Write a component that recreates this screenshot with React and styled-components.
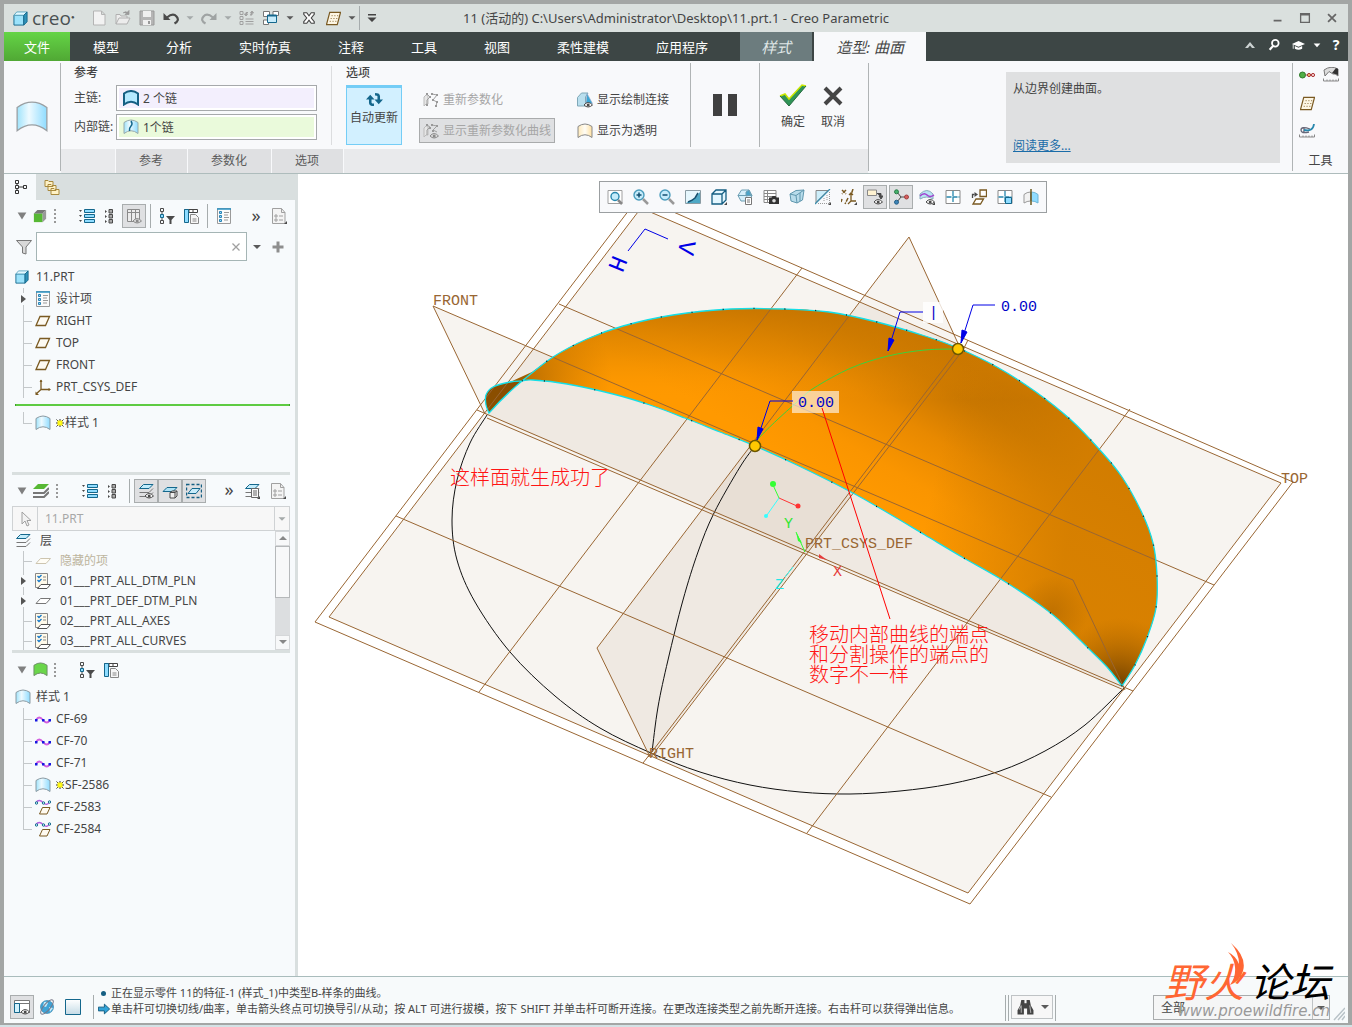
import React from "react";
import styled, { createGlobalStyle, css } from "styled-components";

const GlobalStyle = createGlobalStyle`
  * {
    box-sizing: border-box;
  }
  body {
    margin: 0;
    background: #a3a6a5;
    color: #454545;
    font-family: "Noto Sans", "Noto Sans CJK SC", sans-serif;
    font-size: 12px;
    line-height: 16px;
  }
  button, input, select {
    font: inherit;
    color: inherit;
    margin: 0;
    padding: 0;
    border: 0;
    background: none;
    border-radius: 0;
  }
  svg {
    display: block;
    flex: none;
  }
`;

/* ---------- icons ---------- */

const dark = "#4a4a4a";
const teal = "#14678c";
const sky = "#8fdcff";
const brown = "#7a5a22";
const grey = "#a0a0a0";

const eye = (
  <>
    <path d="M7 13q4-5 8.5 0q-4.5 4-8.5 0z" fill="#fff" stroke={dark} />
    <circle cx="11.2" cy="12.9" r="1.5" fill={dark} />
  </>
);

const corner = <path d="M16 13v3h-3z" fill={dark} />;

const layersShape = (
  <>
    <path d="M5.5 1.5h9.500l-4 4H1.500z" fill="#c2ecfb" stroke={teal} />
    <path d="M1.500 9.500H11l4-4M1.500 13.500H11l4-4" fill="none" stroke="#777" />
  </>
);

const surface = (fill, line, w = 1) => (
  <path d="M1 3.5Q8-1.500 15 3.5V14.5Q8 9 1 14.5z" fill={fill} stroke={line} strokeWidth={w} />
);

const shapes = {
  cube: (
    <>
      <path d="M1 4.5h10.500V15H1z" fill="#9be2fb" stroke={teal} />
      <path d="M1 4.5L4 1h11l-3.500 3.5z" fill="#e3f8ff" stroke="#5aa5c0" />
      <path d="M11.5 4.5L15 1v10.500L11.5 15z" fill="#2f92b8" stroke={teal} />
    </>
  ),
  newDoc: <path d="M2.5 1h8l3.500 3.5V15H2.500zM10.500 1v3.500H14" fill="#f2f2f2" stroke="#b4b4b4" />,
  open: (
    <>
      <path d="M1 14V4.5h4l1 1.500h6v2M1 14l3-6h11l-3 6z" fill="#ececec" stroke="#b0b0b0" />
      <path d="M8 3q3-2.500 5 0M14 .5v4h-4z" fill="#999" stroke="#999" strokeWidth=".8" />
    </>
  ),
  save: (
    <>
      <path d="M1 1h14v14H1z" fill="#b5b5b5" stroke="#999" />
      <path d="M4 1h8v6H4zM4 10h8v5H4z" fill="#efefef" />
      <path d="M9 11h2v3H9z" fill="#999" />
    </>
  ),
  undo: (
    <>
      <path d="M4 7.5q6-5 9.500-1t-2 7" fill="none" stroke={dark} strokeWidth="2.2" />
      <path d="M.5 3v7h7z" fill={dark} />
    </>
  ),
  redo: (
    <>
      <path d="M12 7.5q-6-5-9.500-1t2 7" fill="none" stroke="#9fa3a3" strokeWidth="2.2" />
      <path d="M15.5 3v7h-7z" fill="#9fa3a3" />
    </>
  ),
  caret: <path d="M4 6h8l-4 4z" fill="#5a5a5a" />,
  caretDim: <path d="M4 6h8l-4 4z" fill="#a5aaaa" />,
  caretBig: <path d="M3 4h10l-5 8z" fill="#808080" />,
  customize: <path d="M4 4h8v1.500H4zM3.500 7.500h9L8 12z" fill="#444" />,
  regen: (
    <>
      <path
        d="M1 1.500h3v3H1zM1 6.500h3v3H1zM1 11.500h3v3H1zM6.500 9h8M6.500 11.500h8M6.500 14h8"
        fill="none"
        stroke={grey}
      />
      <path d="M7 5V2.500h2M13 2v3h-2M5.500 4L7 6l1.500-2zM11.500 3L13 1l1.500 2z" fill={grey} stroke={grey} />
    </>
  ),
  windows: (
    <>
      <path d="M.5 1.500h6v5h-6zM10 1.500h5.500v4H10zM.5 10h5v4.500h-5z" fill="#fff" stroke="#777" />
      <path d="M4.500 5h9v7.500h-9z" fill="#c8ecfb" stroke={teal} />
      <path d="M4.500 5h9v1.500h-9z" fill={teal} />
    </>
  ),
  closeBox: (
    <path
      d="M1 1h4l3 4 3-4h4v2l-4 5 4 5v2h-4l-3-4-3 4H1v-2l4-5-4-5z"
      fill="#fff"
      stroke="#444"
      strokeWidth="1.5"
    />
  ),
  gridPlane: (
    <>
      <path d="M4 1.500h11.500l-3.500 13H.5z" fill="#fdf6e4" stroke={brown} strokeWidth="1.3" />
      <path d="M6 5h7.500M5 8h7.500M4 11h7.500" stroke={brown} strokeDasharray="1 2" />
    </>
  ),
  up: <path d="M3 11L8 5l5 6h-3L8 8.500 6 11z" fill="#ccd2d2" />,
  search: (
    <>
      <circle cx="9.500" cy="6" r="3.800" fill="none" stroke="#fff" strokeWidth="2" />
      <path d="M7 9l-4 4.500" stroke="#fff" strokeWidth="2.4" />
    </>
  ),
  cap: (
    <>
      <path d="M0 6l8-3.500L16 6 8 9.500z" fill="#fff" />
      <path d="M3.500 8.500v3.500q4.500 2.500 9 0V8.500L8 10.800z" fill="#fff" />
      <path d="M1.500 6.500V12" stroke="#fff" />
    </>
  ),
  caretWhite: <path d="M3.500 6h9L8 11z" fill="#fff" />,
  minimize: <path d="M3 10h9v2H3z" fill="#666" />,
  maximize: <path d="M3 3h10v10H3zM3 4.500h10" fill="none" stroke="#666" strokeWidth="1.5" />,
  close: <path d="M3.500 3.500l9 9M12.500 3.500l-9 9" stroke="#666" strokeWidth="2" />,
  surface: surface("url(#skyFade)", "#8b9aa2"),
  surfaceLarge: surface("url(#skyFade)", "#9a9fa2", 0.6),
  surfaceBold: surface("#b4e9ff", "#155f83", 2),
  surfaceGreen: surface("#6ad64a", "#6d8c66"),
  surfaceCream: surface("url(#creamFade)", "#888"),
  surfaceInner: (
    <>
      {surface("url(#skyFade)", "#9aa")}
      <path d="M6.500 12q-.500-3 1.500-5t0-5" fill="none" stroke={teal} strokeWidth="1.5" />
    </>
  ),
  refresh: (
    <>
      <path d="M4 6v5q0 2 3.500 2M12 10V5q0-2-3.500-2" fill="none" stroke={teal} strokeWidth="2.4" />
      <path d="M0 8l4-4.500L8 8zM8 8h8l-4 4.500z" fill={teal} />
    </>
  ),
  reparam: (
    <>
      <path d="M1 5q2-3 4-2v9q-2-1-4 2z" fill="#e6e6e6" stroke="#bbb" />
      <path d="M4 14V8l3-3-3-3M9 2l5 1-4 5 4 2-1 4" fill="none" stroke={grey} />
      <path
        d="M3 1h2v2H3zM6 4h2v2H6zM3 12h2v2H3zM8 1h2v2H8zM13 2h2v2h-2zM9 7h2v2H9zM13 9h2v2h-2zM12 13h2v2h-2z"
        fill="#999"
      />
    </>
  ),
  reparamEye: (
    <>
      <path d="M1 5q2-3 4-2v9q-2-1-4 2z" fill="#e6e6e6" stroke="#bbb" />
      <path d="M4 12V7l3-3-3-2M9 2l5 1-4 4 4 2" fill="none" stroke={grey} />
      <path d="M3 1h2v2H3zM6 4h2v2H6zM8 1h2v2H8zM13 2h2v2h-2zM9 7h2v2H9z" fill="#999" />
      <path d="M7 13q4-5 8.500 0q-4.500 4-8.500 0z" fill="#ddd" stroke="#8a8a8a" />
      <circle cx="11.2" cy="12.9" r="1.500" fill="#8a8a8a" />
    </>
  ),
  connect: (
    <>
      <path d="M.5 5.500L4.500 1H11L8.500 5v9h-8z" fill="#b9dfee" stroke="#7fa8b8" />
      <path d="M10 1.500l5.500 10H9z" fill="#3aa6d4" stroke="#9ac" strokeWidth=".6" />
      {eye}
    </>
  ),
  tree: (
    <path
      d="M3.500 1.500h3v3h-3zM3.500 6.500h3v3h-3zM3.500 11.500h3v3h-3zM11.500 6.500h3v3h-3zM5 4.500v2M5 9.500v2M6.500 8h5"
      fill="none"
      stroke="#333"
    />
  ),
  folders: (
    <path
      d="M1 1.500h3l1 1h4v5H1zM4 5.500h3l1 1h4v5H4zM7 9.500h3l1 1h4v5H7z"
      fill="#fff2c6"
      stroke="#a8893d"
    />
  ),
  greenCube: (
    <>
      <path d="M1 5h10v10H1z" fill="#57b834" />
      <path d="M1 5l4-4h10l-4 4z" fill="#777" />
      <path d="M11 5l4-4v10l-4 4z" fill="#999" />
    </>
  ),
  dots: <path d="M5 1v2M5 5v2M5 9v2M5 13v2" stroke="#999" strokeWidth="2" />,
  listRows: (
    <>
      <path d="M5.500 1.500h10v3h-10zM5.500 6.500h10v3h-10zM5.500 11.500h10v3h-10z" fill={sky} stroke={teal} />
      <path d="M0 2h3L1.500 4zM0 7h3L1.500 9zM0 12h3l-1.500 2z" fill={dark} />
    </>
  ),
  listSquares: (
    <>
      <path d="M8 1.500h3.500V5H8zM8 6.500h3.500V10H8zM8 11.500h3.500V15H8z" fill="#aaa" stroke={dark} />
      <path d="M4 2v3l2-1.500zM4 7v3l2-1.500zM4 12v3l2-1.500z" fill={dark} />
    </>
  ),
  columnsEye: (
    <>
      <path
        d="M1.500 1.500h12v12h-12zM1.500 4.500h12M5.500 1.500v12M9.500 1.500v12"
        fill="#ececec"
        stroke="#8a8a8a"
      />
      <path d="M7 13q4-5 8.500 0q-4.500 4-8.500 0z" fill="#ddd" stroke="#8a8a8a" />
      <circle cx="11.2" cy="12.9" r="1.500" fill="#8a8a8a" />
    </>
  ),
  treeFilter: (
    <>
      <path d="M1.500 .5h3v3h-3zM1.500 12.500h3v3h-3zM3 3.500v9" fill="none" stroke={dark} />
      <path d="M1.500 6.500h3v3h-3z" fill={sky} stroke={teal} />
      <path d="M7 8h9l-3.500 4v4h-2v-4z" fill={dark} />
    </>
  ),
  columnsDoc: (
    <>
      <path d="M1.500 1.500h13v3h-13zM6 1.500v3M10 1.500v3" fill="#fff" stroke="#444" />
      <path d="M1.500 1.500H5.500v13h-4z" fill={sky} stroke={teal} />
      <path d="M7.500 6.500h5l3 3v6h-8zM9.500 11h4M9.500 13h4" fill="#f7f7f7" stroke="#888" />
    </>
  ),
  listDoc: (
    <>
      <path d="M1.500 .5h13v15h-13z" fill="#fafafa" stroke="#9a9a9a" />
      <path d="M1 1h14" stroke="#2a93c4" strokeWidth="1.5" />
      <path d="M3.500 3.500h2v2h-2zM3.500 7.500h2v2h-2zM3.500 11.500h2v2h-2z" fill={sky} stroke="#2a83b4" />
      <path d="M8 4.500h5M8 7h4M8 9.500h5M8 12h4" stroke="#999" />
    </>
  ),
  page: (
    <>
      <path d="M1.500 .5h9l3.500 4v11H1.500z" fill="#f4f4f4" stroke={grey} />
      <path d="M4 7h2v2H4zM4 11h2v2H4zM8 8h4M8 12h4M10.500 .5v4H14" fill="none" stroke={grey} />
      {corner}
    </>
  ),
  funnel: <path d="M.5 1.500h15L10 8v7l-3.500-1V8z" fill="#d8d8d8" stroke="#777" />,
  clear: <path d="M4 4l8 8M12 4l-8 8" stroke={grey} strokeWidth="1.5" />,
  plus: <path d="M2.500 8h11M8 2.500v11" stroke="#8e8e8e" strokeWidth="3" />,
  plane: <path d="M5 3.500h9.500L10.500 12.500H1z" fill="#fdfaf2" stroke={brown} strokeWidth="1.3" />,
  csys: (
    <>
      <path d="M6 1v9.500h9M6 10.500L1 15" fill="none" stroke={brown} strokeWidth="1.3" />
      <path d="M4.500 3L6 .5 7.500 3zM13.500 9l2.500 1.500L13.500 12zM.5 12.500V16H4z" fill={brown} />
    </>
  ),
  greenLayers: (
    <>
      <path d="M5 1h11l-5 5H0z" fill="#57b834" />
      <path d="M0 10h11l5-5M0 14h11l5-5" fill="none" stroke="#777" strokeWidth="2" />
    </>
  ),
  layers: layersShape,
  layersEye: (
    <>
      {layersShape}
      {eye}
    </>
  ),
  layerCube: (
    <>
      <path d="M5 4.500h10l-4 4H1z" fill="#aee2f5" stroke={teal} />
      <path d="M8 9.500h5V15H8zM8 9.500L10 8h5v5l-2 2M13 9.500L15 8" fill="#eee" stroke={dark} />
    </>
  ),
  layerSelect: (
    <>
      <path
        d="M.5 1.500h15v13H.5z"
        fill="none"
        stroke="#155f83"
        strokeWidth="1.4"
        strokeDasharray="3 2"
      />
      <path d="M6 5.500h8l-4 5H2z" fill="#c8ecfa" stroke={teal} />
    </>
  ),
  layersDoc: (
    <>
      {layersShape}
      <path d="M7.500 5.500h7v9h-7zM9 8h4M9 10h4M9 12h4" fill="#fafafa" stroke="#666" />
      {corner}
    </>
  ),
  cursor: <path d="M5 1v12l3-3 2 5 2-1-2-4.500h4z" fill="#f2f2f2" stroke={grey} />,
  layer: <path d="M5.500 5.500h10l-4.500 5H1z" fill="#fff" stroke="#777" />,
  layerDim: <path d="M5.500 5.500h10l-4.500 5H1z" fill="#fffdf6" stroke="#cdc5b0" />,
  layerRule: (
    <>
      <path d="M.5 .5h12v14H.5z" fill="#fffaea" stroke="#888" />
      <path d="M2.500 3L4 4.500 6.500 2M2.500 7L4 8.500 6.500 6" fill="none" stroke="#1778c8" strokeWidth="1.4" />
      <path d="M8 4h3M8 7h3" stroke="#888" />
      <path d="M6 11.500h9.500L12 15.500H2.500z" fill="#fff" stroke="#555" />
    </>
  ),
  curve: (
    <>
      <path d="M1 9q3-5 7 0t7 0" fill="none" stroke="#d25fe0" strokeWidth="1.8" />
      <path d="M0 8h2.500v2.500H0zM7 8h2.500v2.500H7zM13.500 8H16v2.500h-2.500z" fill="#1717e0" />
    </>
  ),
  curveOnPlane: (
    <>
      <path d="M1 3.500q3-4 7 0t7-1" fill="none" stroke="#b45fe0" strokeWidth="1.3" />
      <circle cx="1.500" cy="4" r="1.200" fill="#cff" stroke={teal} />
      <circle cx="8.500" cy="4" r="1.200" fill="#cff" stroke={teal} />
      <circle cx="14.500" cy="3" r="1.200" fill="#cff" stroke={teal} />
      <path d="M7.500 8.500H15l-3 6.500H4.500z" fill="#fffaf0" stroke={brown} />
    </>
  ),
  star: (
    <>
      <path d="M8 0v16M0 8h16M1 1l14 14M15 1L1 15" stroke="#333" strokeWidth="2" />
      <path d="M3 3h10v10H3z" fill="#f6e800" />
      <path d="M5 5h6v6H5z" fill="#ffff20" />
    </>
  ),
  zoomFit: (
    <>
      <path d="M1 1.500h14v13H1z" fill="#fff" stroke={grey} />
      <circle cx="8" cy="7.500" r="4" fill="#c5ecfb" stroke="#2787ad" strokeWidth="1.4" />
      <path d="M11 11l4 4" stroke="#888" strokeWidth="2.5" />
    </>
  ),
  zoomIn: (
    <>
      <circle cx="6" cy="6" r="5" fill="#c5ecfb" stroke="#4a9cbc" strokeWidth="1.4" />
      <path d="M3.500 6h5M6 3.500v5" stroke="#124f70" strokeWidth="1.5" />
      <path d="M10 10l5 5" stroke="#999" strokeWidth="2.5" />
    </>
  ),
  zoomOut: (
    <>
      <circle cx="6" cy="6" r="5" fill="#c5ecfb" stroke="#4a9cbc" strokeWidth="1.4" />
      <path d="M3.500 6h5" stroke="#124f70" strokeWidth="1.5" />
      <path d="M10 10l5 5" stroke="#999" strokeWidth="2.5" />
    </>
  ),
  repaint: (
    <>
      <path d="M.5 1.500h15v13H.5z" fill="#e6f7fd" stroke="#8a9ca4" />
      <path d="M1 14L10 9l5-6v11z" fill="#4fa9c6" />
      <path d="M3 13q5-2 7-4l3-5" fill="none" stroke="#15506e" strokeWidth="1.5" />
    </>
  ),
  display: (
    <>
      <path
        d="M1 5h10v10H1zM1 5l4-4h10v10l-4 4M11 5l4-4"
        fill="#e4f7ff"
        stroke="#155f83"
        strokeWidth="1.3"
      />
      {corner}
    </>
  ),
  saved: (
    <>
      <path d="M1 6.500L4.500 1H12l3 5.500L12 12H4z" fill="#d5effa" stroke="#6c9fb4" />
      <path d="M1 6.500h14M9 7V3l3-2 2 5z" fill="#49a4c9" stroke="#6c9fb4" />
      <path d="M8.500 8.500h6v7h-6zM10 11h3M10 13h3" fill="#fff" stroke="#777" />
    </>
  ),
  snapshot: (
    <>
      <path
        d="M1 1.500h12v12H1zM1 4.500h12M1 7.500h12M1 10.500h12M4.500 1.500v12"
        fill="#fff"
        stroke="#888"
      />
      <path d="M6 8.500h2.500l1-1.500h3l1 1.500H16V15H6z" fill="#333" />
      <circle cx="11" cy="11.700" r="1.800" fill="#ddd" />
    </>
  ),
  perspective: (
    <>
      <path d="M1 5l6-3.500 8-.5-1.500 10L8 14l-6-2z" fill="#b8dceb" stroke="#5f97ae" />
      <path d="M1 5l6 1.500 8-5.500M7 6.500L8 14M11 4v8" fill="none" stroke="#5f97ae" />
    </>
  ),
  section: (
    <>
      <path d="M1 1.500h12L1 13.500z" fill="#cdeefa" stroke="#888" />
      <path d="M14.500 3v11.500H3M12 6v6M9 9v3" fill="none" stroke="#999" strokeDasharray="1 1" />
      <path d="M0 15L15 0" stroke="#3d8cab" strokeWidth="1.3" />
      {corner}
    </>
  ),
  datum: (
    <>
      <path
        d="M1 1l4 4M5 1L1 5M12 0l-2 6M7 9l-3 6M1 10l-1 3"
        stroke={brown}
        strokeWidth="1.5"
        strokeDasharray="4 1"
      />
      <path d="M10 5v7h5M10 12l-3 3M8 6l2-2 2 2" fill="none" stroke={brown} strokeWidth="1.3" />
      {corner}
    </>
  ),
  annotation: (
    <>
      <path d="M.5 1h9v5.500h-9z" fill="#fff3d2" stroke="#888" />
      <path d="M10 4.500h4v4M12 7h4l-2 3z" fill={dark} stroke={dark} />
      {eye}
    </>
  ),
  spin: (
    <>
      <path d="M4 3l4 5h5M8 8l-4 5" fill="none" stroke={dark} />
      <circle cx="3.500" cy="2.800" r="2" fill="#46b36c" stroke="#2a7a48" />
      <circle cx="13.500" cy="8" r="2" fill="#d86060" stroke="#a04040" />
      <circle cx="3.500" cy="13.200" r="2" fill="#3f86b8" stroke="#245f88" />
    </>
  ),
  styleDisplay: (
    <>
      <path d="M1 5q7-7 13 0v5q-6-4-13 0z" fill="#b8e3f4" stroke="#8ab" />
      <path d="M1 7q4-4 7-1t7 0" fill="none" stroke="#a33fd0" strokeWidth="1.5" />
      {eye}
      {corner}
    </>
  ),
  fourView: (
    <>
      <path d="M1 1.500h14v13H1z" fill="#fff" stroke="#8a8a8a" />
      <path d="M8 2v12M1.500 8h13" stroke="#2787ad" strokeWidth="1.3" strokeDasharray="5 1" />
    </>
  ),
  activePlane: (
    <>
      <path d="M9 1h6.500v6.500H9z" fill="#fff" stroke={brown} strokeWidth="1.3" />
      <path d="M5 10h7.500l-3 5H2z" fill="#fff" stroke={brown} strokeWidth="1.3" />
      <path d="M1.500 9V5.500h2" fill="none" stroke={dark} strokeWidth="1.3" />
      <path d="M3.500 3v5L7 5.500z" fill={dark} />
    </>
  ),
  singleView: (
    <>
      <path d="M1 1.500h14v13H1z" fill="#fff" stroke="#8a8a8a" />
      <path d="M8 2v12M1.500 8h13" stroke="#2787ad" strokeWidth="1.3" strokeDasharray="5 1" />
      <path d="M8.500 8.500h6v6h-6z" fill={sky} stroke={teal} />
    </>
  ),
  symmetry: (
    <>
      <path d="M1 5.500Q4 3 7.500 3v9Q4 12 1 14z" fill="#f2f2f2" stroke="#999" />
      <path d="M8.500 3Q12 3 15 5.500V14q-3-2-6.500-2z" fill={sky} stroke="#6bb5d6" />
      <path d="M8 0v16" stroke="#6b5a20" strokeWidth="1.5" />
    </>
  ),
  pins: (
    <>
      <circle cx="3.500" cy="8" r="3" fill="#4fae45" stroke="#2e7a29" />
      <path d="M6.500 8h3" stroke="#a55" />
      <circle cx="10" cy="8" r="1.600" fill="#f0c070" stroke="#a33" />
      <circle cx="14" cy="8" r="1.600" fill="#f6d5d5" stroke="#a33" />
    </>
  ),
  measure: (
    <>
      <path d="M1 3q7-5 14-1v7q-3-3-5-2L6 4.500 2 9z" fill="#ddd" stroke="#777" />
      <path d="M9 6l4-5 2 1v6z" fill="#333" />
      <path d="M.5 11.500V14h15v-2.500M4 12.500V14M7 12.500V14M10 12.500V14M13 12.500V14" fill="none" stroke="#888" />
    </>
  ),
  analysis: (
    <>
      <path d="M11 6Q2 3 2 7t8 2M5 5v5" fill="none" stroke="#667" strokeWidth="1.3" />
      <path d="M5 7q9 2 10-6" fill="none" stroke="#2787ad" strokeWidth="1.8" />
      <path d="M.5 11.500V14h15v-2.500M4 12.500V14M7 12.500V14M10 12.500V14M13 12.500V14" fill="none" stroke="#888" />
    </>
  ),
  panelEye: (
    <>
      <path d="M.5 1.500h15v12H.5zM.5 4.500h15" fill="#fff" stroke="#777" />
      <path d="M.5 4.500h5v9h-5z" fill="#d2f1fc" stroke={teal} />
      {eye}
    </>
  ),
  globe: (
    <>
      <circle cx="8" cy="8" r="6.500" fill="#3fa3d6" stroke="#2a7ba6" strokeWidth=".6" />
      <path d="M5 3q3-1 4 1L7 8 4 7zM10 8l4 1-3 4z" fill="#c5ebfa" />
      <ellipse cx="8" cy="8" rx="9" ry="3.200" transform="rotate(-50 8 8)" fill="none" stroke="#778" />
    </>
  ),
  blank: <path d="M.5 .5h15v15H.5z" fill="url(#paneFade)" stroke={teal} />,
  nextArrow: (
    <path d="M.5 5.500h8V1.500L15.500 8l-7 6.500v-4h-8z" fill="#31a3d8" stroke="#155f83" strokeWidth="1.3" />
  ),
  binoculars: (
    <>
      <path d="M4 1h3v3h2V1h3l1 5 2.500 4.500v4h-6V9h-3v5.500h-6v-4L3 6z" fill="#444" />
      <path d="M2 10l2-4v7M12 6l1 7" stroke="#aaa" fill="none" />
    </>
  ),
};

const Icon = ({ name, size = 16 }) => (
  <svg width={size} height={size} viewBox="0 0 16 16" aria-hidden="true">
    {shapes[name]}
  </svg>
);

/* ---------- window frame ---------- */

const Gradients = styled.svg`
  position: absolute;
`;

const Window = styled.div`
  display: flex;
  flex-direction: column;
  min-height: 100vh;
  padding: 4px 4px 2px;
  border-bottom: 2px solid #d3e2e5;
`;

const IconButton = styled.button`
  display: flex;
  align-items: center;
  justify-content: center;
  width: ${(props) => props.$w || 24}px;
  height: 24px;
  flex: none;
  ${(props) =>
    props.$on &&
    css`
      background: #dfe0e2;
      border: 1px solid #a9adae;
    `}
`;

const Divider = styled.span`
  width: 1px;
  height: ${(props) => props.$h || 24}px;
  margin: 0 ${(props) => props.$m || 0}px;
  background: #a6acad;
  flex: none;
`;

const TitleBar = styled.header`
  display: grid;
  grid-template-columns: 1fr auto 1fr;
  align-items: center;
  height: 28px;
  background: #dae0de;
`;

const QuickAccess = styled.div`
  display: flex;
  align-items: center;
  padding-left: 9px;
`;

const Brand = styled.span`
  width: 59px;
  padding-left: 4px;
  font: 19px/24px "Open Sans", sans-serif;
  color: #4a5152;

  sup {
    font-size: 6px;
    line-height: 8px;
    vertical-align: 6px;
  }
`;

const Title = styled.h1`
  margin: 0;
  font-size: 13px;
  font-weight: 400;
  white-space: pre;
`;

const WindowButtons = styled.div`
  display: flex;
  justify-content: flex-end;
  gap: 3px;
  padding-right: 4px;
`;

const TabBar = styled.nav`
  display: flex;
  height: 29px;
  background: #3d4645;
`;

const FileTab = styled.button`
  width: 66px;
  color: #fff;
  font-size: 13px;
  background: linear-gradient(#64d446, #50a834);
`;

const Tabs = styled.div`
  display: flex;
  gap: 1px;
`;

const Tab = styled.button`
  padding: 0 23px;
  font-size: 13px;
  color: #fff;
  white-space: nowrap;
`;

const ContextTab = styled(Tab)`
  margin-left: ${(props) => (props.$active ? 2 : 9)}px;
  padding: 0 ${(props) => (props.$active ? 22 : 21)}px;
  font-size: 15px;
  font-style: italic;
  color: ${(props) => (props.$active ? "#454545" : "#dfe6e6")};
  background: ${(props) => (props.$active ? "#f8f9fb" : "#6c7c7e")};
`;

const TabTools = styled.div`
  display: flex;
  align-items: center;
  height: 26px;
  margin-left: auto;

  b {
    color: #fff;
    font-size: 14px;
  }
`;

/* ---------- ribbon ---------- */

const Ribbon = styled.section`
  display: flex;
  height: 113px;
  background: #f8f9fb;
  border-bottom: 1px solid #aebcbc;
`;

const RibbonIcon = styled.div`
  width: 56px;
  display: flex;
  align-items: center;
  justify-content: center;
`;

const Line = styled.span`
  width: 1px;
  flex: none;
  margin: ${(props) => (props.$short ? "5px 0 4px" : "2px 0")};
  background: ${(props) => (props.$short ? "#dcdddf" : "#b0b4b5")};
`;

const Dashboard = styled.div`
  width: 807px;
  display: flex;
  flex-direction: column;
`;

const Controls = styled.div`
  display: flex;
  height: 88px;
`;

const Group = styled.div`
  width: ${(props) => props.$w}px;
  padding-left: ${(props) => props.$inset || 13}px;
`;

const GroupTitle = styled.h2`
  margin: 0;
  padding: 4px 0;
  font-size: 12px;
  line-height: 16px;
  font-weight: 500;
`;

const Collector = styled.label`
  display: flex;
  align-items: center;
  height: 26px;
  margin-bottom: 3px;

  > span:first-child {
    width: 42px;
  }
`;

const CollectorBox = styled.span`
  display: flex;
  align-items: center;
  gap: 4px;
  width: 201px;
  height: 26px;
  padding-left: 6px;
  border: 1px solid #a6a9ab;
  background: ${(props) => props.$color};
  box-shadow: inset 0 0 0 2px #fff;

  input {
    width: 160px;
    height: 20px;
  }
`;

const Options = styled.div`
  display: grid;
  grid-template-columns: 73px 154px auto;
  align-content: start;
`;

const UpdateButton = styled.button`
  grid-row: span 2;
  width: 56px;
  height: 60px;
  display: flex;
  flex-direction: column;
  align-items: center;
  gap: 2px;
  padding-top: 3px;
  background: #d2f0ff;
  border: 1px solid #74cdf6;
  border-top-width: 3px;
`;

const OptionButton = styled.button`
  justify-self: start;
  display: flex;
  align-items: center;
  gap: 4px;
  height: 25px;
  margin: 2px 0 4px;
  padding: 0 3px;
  white-space: nowrap;
  border: 1px solid ${(props) => (props.$pressed ? "#a9abac" : "transparent")};
  background: ${(props) => (props.$pressed ? "#dfe0e2" : "none")};

  &:disabled {
    color: #a6a6a6;
  }
`;

const Pause = styled.button`
  width: 68px;
  display: flex;
  align-items: center;
  justify-content: center;
  gap: 6px;

  i {
    width: 9px;
    height: 22px;
    background: #404040;
  }
`;

const Confirm = styled.div`
  display: flex;
  padding-left: 13px;
`;

const ConfirmButton = styled.button`
  width: 40px;
  display: flex;
  flex-direction: column;
  align-items: center;
  padding-top: 23px;
  gap: 6px;
`;

const Flyouts = styled.div`
  display: flex;
  gap: 1px;
  height: 24px;
  padding-left: 55px;
  background: linear-gradient(to right, #e9eaec 54px, #f8f9fb 54px 283px, #e9eaec 283px);

  button {
    padding: 0 24px 0 23px;
    color: #5a5a5a;
    background: #dfe0e2;
  }
`;

const Help = styled.aside`
  width: 274px;
  margin: 11px 12px 10px auto;
  padding: 9px 7px;
  display: flex;
  flex-direction: column;
  justify-content: space-between;
  background: #dfe0e1;

  p {
    margin: 0;
  }
  a {
    color: #1a6ca8;
  }
`;

const Tools = styled.div`
  width: 55px;
  padding: 2px 2px 0;

  div {
    display: grid;
    grid-template-columns: 24px 24px;
    grid-auto-rows: 28px;
  }
  p {
    margin: 6px 0 0;
    text-align: center;
  }
`;

/* ---------- model tree column ---------- */

const Workspace = styled.main`
  display: flex;
  flex: 1;
`;

const Sidebar = styled.aside`
  width: 294px;
  flex: none;
  background: #f7fafc;
  border-right: 3px solid #d9dfdf;
`;

const SideTabs = styled.div`
  display: flex;
  height: 26px;
  background: #d9dfdf;

  button {
    width: 32px;
    height: 26px;
  }
  button:first-child {
    background: #f7fafc;
  }
`;

const Toolbar = styled.div`
  display: flex;
  align-items: center;
  height: ${(props) => props.$h || 32}px;
  padding-left: 10px;
`;

const Spacer = styled.span`
  width: ${(props) => props.$w}px;
  flex: none;
`;

const More = styled.button`
  width: 22px;
  font-size: 18px;
  line-height: 20px;
  padding-bottom: 3px;
`;

const SearchRow = styled.div`
  display: flex;
  align-items: center;
  height: 29px;
  padding-left: 12px;
  margin-bottom: 5px;
`;

const SearchBox = styled.div`
  display: flex;
  align-items: center;
  width: 211px;
  height: 29px;
  margin-left: 4px;
  background: #fff;
  border: 1px solid #a5b5b5;

  input {
    width: 192px;
    height: 27px;
    padding: 0 6px;
  }
`;

const Tree = styled.ul`
  margin: 0;
  padding: 0;
  list-style: none;
`;

const ActiveFeature = styled(Tree)`
  padding-bottom: 38px;
`;

const Row = styled.li`
  display: flex;
  align-items: center;
  height: ${(props) => props.$h || 22}px;
  padding-left: ${(props) => (props.$root ? 11 : 19)}px;
  color: ${(props) => (props.$dim ? "#bdb59e" : "#454545")};
  white-space: pre;
`;

const Guide = styled.span`
  display: flex;
  align-items: center;
  align-self: stretch;
  width: 10px;
  margin-right: 2px;
  background-image: linear-gradient(#c4c8ca, #c4c8ca), linear-gradient(#c4c8ca, #c4c8ca);
  background-repeat: no-repeat;
  background-position: 0 0, 0 50%;
  background-size: 1px ${(props) => (props.$last ? "50%" : "100%")}, ${(props) => (props.$open ? "0 0" : "9px 1px")};

  svg {
    margin-left: -2px;
  }
`;

const Label = styled.span`
  padding-left: ${(props) => props.$gap || 5}px;
`;

const InsertLine = styled.div`
  height: 2px;
  margin: 6px 5px 6px 11px;
  background: #5ecb42;
  border: solid #3f9f2a;
  border-width: 0 1px;
`;

const PanelEdge = styled.div`
  height: 3px;
  margin: 0 5px 0 8px;
  background: #d9dfdf;
`;

const Combo = styled.div`
  display: flex;
  align-items: center;
  height: 25px;
  margin: 0 5px 0 8px;
  border: 1px solid #cfd2d4;
  background: #f7f7f7;

  select {
    flex: 1;
    height: 23px;
    padding-left: 7px;
    appearance: none;
    color: #a8a8a8;
    opacity: 1;
    border-left: 1px solid #cfd2d4;
    border-right: 1px solid #cfd2d4;
  }
`;

const LayerList = styled.div`
  display: flex;
  height: 119px;
  overflow: hidden;
  margin-right: 5px;

  ul {
    flex: 1;
  }
`;

const ScrollBar = styled.div`
  width: 15px;
  display: flex;
  flex-direction: column;
  background: #dcdee0;

  button {
    height: 15px;
    background: #f7f8f9;
    border: 1px solid #d5d7d9;
    display: flex;
    justify-content: center;
  }
  i {
    height: 52px;
    background: #f7f8f9;
    border: 1px solid #b5b8ba;
    margin-bottom: auto;
  }
`;

const TreeRow = ({ icon, text, h, last, open, star, dim, gap }) => (
  <Row $h={h} $dim={dim}>
    <Guide $last={last} $open={open}>
      {open && (
        <svg width="6" height="12" viewBox="0 0 6 12" aria-hidden="true">
          <path d="M0 0h6v12H0z" fill="#f7fafc" />
          <path d="M0 2l5 4-5 4z" fill="#555" />
        </svg>
      )}
    </Guide>
    <Icon name={icon} />
    {star && <Label />}
    {star && <Icon name="star" size={8} />}
    <Label $gap={star ? 1 : gap}>{text}</Label>
  </Row>
);

const modelItems = [
  { icon: "listDoc", text: "设计项", open: true },
  { icon: "plane", text: "RIGHT" },
  { icon: "plane", text: "TOP" },
  { icon: "plane", text: "FRONT" },
  { icon: "csys", text: "PRT_CSYS_DEF" },
];

const layerItems = [
  { icon: "layerDim", text: "隐藏的项", dim: true },
  { icon: "layerRule", text: "01___PRT_ALL_DTM_PLN", open: true },
  { icon: "layer", text: "01___PRT_DEF_DTM_PLN", open: true },
  { icon: "layerRule", text: "02___PRT_ALL_AXES" },
  { icon: "layerRule", text: "03___PRT_ALL_CURVES" },
];

const styleItems = [
  { icon: "curve", text: "CF-69" },
  { icon: "curve", text: "CF-70" },
  { icon: "curve", text: "CF-71" },
  { icon: "surface", text: "SF-2586", star: true },
  { icon: "curveOnPlane", text: "CF-2583" },
  { icon: "curveOnPlane", text: "CF-2584", last: true },
];

const ModelTree = () => (
  <Sidebar>
    <SideTabs>
      <IconButton aria-label="模型树"><Icon name="tree" /></IconButton>
      <IconButton aria-label="文件夹"><Icon name="folders" /></IconButton>
    </SideTabs>
    <Toolbar>
      <IconButton $w={16} aria-label="折叠"><Icon name="caretBig" size={14} /></IconButton>
      <IconButton $w={20} aria-label="模型"><Icon name="greenCube" size={14} /></IconButton>
      <Icon name="dots" />
      <Spacer $w={10} />
      <IconButton $w={22} aria-label="展开"><Icon name="listRows" /></IconButton>
      <IconButton $w={22} aria-label="收起"><Icon name="listSquares" /></IconButton>
      <Spacer $w={2} />
      <IconButton $on aria-label="列"><Icon name="columnsEye" /></IconButton>
      <Divider $m={4} />
      <IconButton aria-label="过滤"><Icon name="treeFilter" /></IconButton>
      <IconButton aria-label="树列"><Icon name="columnsDoc" /></IconButton>
      <Divider $m={4} />
      <IconButton aria-label="列表"><Icon name="listDoc" /></IconButton>
      <Spacer $w={9} />
      <More aria-label="更多">»</More>
      <IconButton aria-label="设置"><Icon name="page" /></IconButton>
    </Toolbar>
    <SearchRow>
      <Icon name="funnel" />
      <SearchBox>
        <input type="text" aria-label="搜索模型树" />
        <Icon name="clear" size={14} />
      </SearchBox>
      <IconButton $w={20} aria-label="搜索选项"><Icon name="caret" /></IconButton>
      <IconButton $w={22} aria-label="添加"><Icon name="plus" /></IconButton>
    </SearchRow>
    <Tree>
      <Row $root>
        <Icon name="cube" size={14} />
        <Label $gap={7}>11.PRT</Label>
      </Row>
      {modelItems.map((item) => (
        <TreeRow key={item.text} {...item} />
      ))}
    </Tree>
    <InsertLine />
    <ActiveFeature>
      <TreeRow icon="surface" text="样式 1" star last />
    </ActiveFeature>
    <PanelEdge />
    <Toolbar $h={31}>
      <IconButton $w={16} aria-label="折叠"><Icon name="caretBig" size={14} /></IconButton>
      <IconButton $w={22} aria-label="层"><Icon name="greenLayers" /></IconButton>
      <Icon name="dots" />
      <Spacer $w={11} />
      <IconButton $w={22} aria-label="展开"><Icon name="listRows" /></IconButton>
      <IconButton $w={22} aria-label="收起"><Icon name="listSquares" /></IconButton>
      <Spacer $w={2} />
      <Divider $m={4} />
      <IconButton $on aria-label="层显示"><Icon name="layersEye" /></IconButton>
      <IconButton $on aria-label="层对象"><Icon name="layerCube" /></IconButton>
      <IconButton $on aria-label="层选择"><Icon name="layerSelect" /></IconButton>
      <Spacer $w={12} />
      <More aria-label="更多">»</More>
      <IconButton aria-label="层设置"><Icon name="layersDoc" /></IconButton>
      <IconButton $w={28} aria-label="设置"><Icon name="page" /></IconButton>
    </Toolbar>
    <Combo>
      <IconButton aria-label="选择"><Icon name="cursor" /></IconButton>
      <select aria-label="活动层对象" disabled>
        <option>11.PRT</option>
      </select>
      <Icon name="caretDim" size={14} />
    </Combo>
    <LayerList>
      <Tree>
        <Row $root $h={20}>
          <Icon name="layers" />
          <Label $gap={9}>层</Label>
        </Row>
        {layerItems.map((item) => (
          <TreeRow key={item.text} h={20} gap={9} {...item} />
        ))}
      </Tree>
      <ScrollBar>
        <button aria-label="向上">
          <svg width="8" height="12" viewBox="0 0 8 12" aria-hidden="true">
            <path d="M0 8l4-4 4 4z" fill="#888" />
          </svg>
        </button>
        <i />
        <button aria-label="向下">
          <svg width="8" height="12" viewBox="0 0 8 12" aria-hidden="true">
            <path d="M0 4l4 4 4-4z" fill="#888" />
          </svg>
        </button>
      </ScrollBar>
    </LayerList>
    <PanelEdge />
    <Toolbar $h={33}>
      <IconButton $w={16} aria-label="折叠"><Icon name="caretBig" size={14} /></IconButton>
      <IconButton $w={20} aria-label="样式"><Icon name="surfaceGreen" size={15} /></IconButton>
      <Icon name="dots" />
      <Spacer $w={9} />
      <IconButton aria-label="过滤"><Icon name="treeFilter" /></IconButton>
      <IconButton aria-label="树列"><Icon name="columnsDoc" /></IconButton>
    </Toolbar>
    <Tree>
      <Row $root>
        <Icon name="surface" />
        <Label>样式 1</Label>
      </Row>
      {styleItems.map((item) => (
        <TreeRow key={item.text} {...item} />
      ))}
    </Tree>
  </Sidebar>
);

/* ---------- graphics window ---------- */

const Graphics = styled.section`
  position: relative;
  flex: 1;
  min-width: 0;
  background: #fff;
  overflow: hidden;

  > svg {
    width: 100%;
    height: auto;
  }
`;

const ViewBar = styled.div`
  position: absolute;
  top: 7px;
  left: 50%;
  transform: translateX(-50%);
  display: flex;
  align-items: center;
  height: 32px;
  padding: 0 3px;
  gap: 2px;
  background: #f8f9fb;
  border: 1px solid #9b9fa1;
`;

const viewTools = [
  ["zoomFit", "重新调整"],
  ["zoomIn", "放大"],
  ["zoomOut", "缩小"],
  ["repaint", "重画"],
  ["display", "显示样式"],
  ["saved", "已保存方向"],
  ["snapshot", "视图管理器"],
  ["perspective", "透视图"],
  ["section", "截面"],
  ["datum", "基准显示"],
  ["annotation", "注释显示", true],
  ["spin", "旋转中心", true],
  ["styleDisplay", "样式显示"],
  ["fourView", "四视图"],
  ["activePlane", "活动平面"],
  ["singleView", "单视图"],
  ["symmetry", "对称"],
];

// Catmull-Rom spline through the points, as cubic segments
const spline = (points, start = "M") =>
  points
    .map(([x, y], i) => {
      if (i === 0) return `${start}${x} ${y}`;
      const p0 = points[i - 2] || points[i - 1];
      const p1 = points[i - 1];
      const p3 = points[i + 1] || points[i];
      const c1 = [p1[0] + (x - p0[0]) / 6, p1[1] + (y - p0[1]) / 6];
      const c2 = [x - (p3[0] - p1[0]) / 6, y - (p3[1] - p1[1]) / 6];
      return `C${c1.join(" ")} ${c2.join(" ")} ${x} ${y}`;
    })
    .join("");

const rimTop = [
  [522, 381], [553, 357], [587, 339], [623, 326], [673, 315], [731, 309], [784, 309], [829, 312],
  [877, 322], [925, 336], [958, 348], [997, 367], [1036, 392], [1071, 420], [1099, 449], [1122, 477],
  [1142, 513], [1153, 543], [1157, 575], [1156, 608], [1147, 638], [1135, 665], [1122, 686],
];

const rimBottom = [
  [1122, 686], [1107, 667], [1088, 648], [1059, 620], [1033, 600], [999, 578], [962, 557], [925, 535],
  [888, 513], [851, 492], [799, 466], [755, 446], [720, 432], [685, 418], [650, 405], [613, 394],
  [567, 384], [533, 380], [522, 381],
];

const lip = [[522, 381], [510, 382], [493, 387], [486, 395], [486, 405], [489, 413]];

const baseCircle = [
  [487, 415], [470, 443], [457, 480], [452, 520], [457, 560], [475, 602], [510, 652], [555, 696], [600, 728],
  [651, 753], [700, 772], [750, 785], [800, 792], [850, 794], [900, 791], [950, 784], [1000, 771],
  [1045, 751], [1085, 725], [1124, 688],
];

const profile = [[755, 446], [740, 467], [714, 513], [698, 552], [683, 600], [668, 660], [658, 707], [652, 752]];

const innerCurve = [
  [755, 446], [759, 438], [777, 420], [796, 403], [814, 388], [851, 368], [888, 356], [925, 350], [958, 349],
];

const CadText = styled.text`
  font: 15px "Liberation Mono", monospace;
  fill: ${(props) => props.$color || "#996633"};
`;

const NoteText = styled.text`
  font: 20px/20px "Noto Sans CJK SC", sans-serif;
  font-weight: 300;
  fill: #ff1414;
`;

const Leader = ({ d, x, y }) => (
  <g stroke="#0000e6" fill="none">
    <path d={d} />
    <path d={`M${x} ${y}l1 -13l5 2z`} fill="#0000e6" />
  </g>
);

const Model = () => (
  <svg viewBox="298 174 1050 802" role="img" aria-label="11.PRT">
    <defs>
      <linearGradient id="shade" gradientUnits="userSpaceOnUse" x1="820" y1="475" x2="905" y2="329">
        <stop offset="0" stopColor="#ff9900" />
        <stop offset=".24" stopColor="#fa9500" />
        <stop offset=".53" stopColor="#e88900" />
        <stop offset=".82" stopColor="#c87600" />
        <stop offset="1" stopColor="#be6f00" />
      </linearGradient>
      <linearGradient id="crown" gradientUnits="userSpaceOnUse" x1="0" y1="308" x2="0" y2="400">
        <stop offset="0" stopColor="#c67500" stopOpacity=".85" />
        <stop offset=".5" stopColor="#d98200" stopOpacity=".45" />
        <stop offset="1" stopColor="#ff9900" stopOpacity="0" />
      </linearGradient>
      <linearGradient id="side" gradientUnits="userSpaceOnUse" x1="930" y1="500" x2="1070" y2="530">
        <stop offset="0" stopColor="#cf7c00" stopOpacity="0" />
        <stop offset="1" stopColor="#d47e00" stopOpacity=".9" />
      </linearGradient>
      <radialGradient id="tip" gradientUnits="userSpaceOnUse" cx="1120" cy="688" r="70">
        <stop offset="0" stopColor="#5c3400" stopOpacity=".9" />
        <stop offset="1" stopColor="#a86200" stopOpacity="0" />
      </radialGradient>
      <radialGradient id="dent" gradientUnits="userSpaceOnUse" cx="1052" cy="612" r="36">
        <stop offset="0" stopColor="#a86200" stopOpacity=".5" />
        <stop offset="1" stopColor="#a86200" stopOpacity="0" />
      </radialGradient>
      <radialGradient id="neck" gradientUnits="userSpaceOnUse" cx="522" cy="380" r="90">
        <stop offset="0" stopColor="#a86200" stopOpacity=".8" />
        <stop offset="1" stopColor="#c87600" stopOpacity="0" />
      </radialGradient>
    </defs>

    <g fill="#996633" fillOpacity=".075">
      <path d="M641 208L1281 483 968 893 329 617z" />
      <path d="M433 306L1073 580 1125 690 485 414z" />
      <path d="M909 237L962 352 650 757 597 648z" />
    </g>

    <path d={spline(baseCircle)} fill="none" stroke="#111" />
    <path d={spline(profile)} fill="none" stroke="#111" />

    <path d="M510 382L532 372 553 357 522 381z" fill="#a05f00" />
    <path d={`${spline(lip)}Q505 395 522 381z`} fill="#8a4e00" />
    {["shade", "crown", "side", "neck", "dent", "tip"].map((id) => (
      <path key={id} d={`${spline(rimTop)}${spline(rimBottom, "L")}z`} fill={`url(#${id})`} />
    ))}

    <g fill="none" stroke="#996633">
      <path d="M639 197L1293 482 970 904 315 622z" />
      <path d="M641 208L1281 483 968 893 329 617z" />
      <path d="M479 692L802 268M807 833L1130 409" />
      <path d="M559 304L1214 585M396 516L1051 797" />
      <path d="M433 306L1073 580 1125 690M485 414L433 306" />
      <path d="M477 410L1133 691M487 418L1124 690" />
      <path d="M962 352L909 237 597 648 650 757" />
      <path d="M648 757L958 350M651 757L963 350M643 763L654 749M962 352L968 340" />
    </g>

    <g fill="none" stroke="#14dfe8" strokeWidth="1.3">
      <path d={`${spline(rimTop)}${spline(rimBottom)}${spline(lip)}Q505 395 522 381`} />
      <path d={spline(rimTop)} stroke="#111" strokeDasharray="1 30" />
      <path d={spline(rimBottom)} stroke="#111" strokeDasharray="1 50" />
    </g>
    <path d={spline(innerCurve)} fill="none" stroke="#3cd23c" />

    <path d="M923 302h20v21h-20z" fill="#fff" fillOpacity=".8" />
    <path d="M792 391h47v22h-47z" fill="#fff" fillOpacity=".6" />
    <Leader d="M793 401H770L757 440" x={757} y={440} />
    <Leader d="M923 312H900L888 351" x={888} y={351} />
    <Leader d="M995 305H973L961 343" x={961} y={343} />
    <path d="M628 251L645 229 668 239" fill="none" stroke="#0000e6" />
    <CadText $color="#0000c8" x="798" y="407">0.00</CadText>
    <CadText $color="#0000c8" x="1001" y="311">0.00</CadText>
    <CadText $color="#0000c8" x="929" y="317">|</CadText>
    <g fontFamily="Liberation Mono, monospace" fontSize="24" fill="#0000e6" textAnchor="middle">
      <text transform="translate(618 264) rotate(112)" y="8">H</text>
      <text transform="translate(687 248) rotate(100)" y="8">V</text>
    </g>

    <g stroke="#6b5600" strokeWidth="1.5" fill="#ffc800">
      <circle cx="755" cy="446" r="5.5" />
      <circle cx="958" cy="349" r="5.5" />
    </g>

    <g fill="none">
      <path d="M779 498L773 485M805 552L796 532" stroke="#33ff33" />
      <path d="M779 498L797 506" stroke="#ff3333" />
      <path d="M779 498L767 515M793 567L785 577" stroke="#33ffff" />
    </g>
    <circle cx="773" cy="484" r="3" fill="#33ff33" />
    <circle cx="798" cy="506" r="2.5" fill="#ff3333" />
    <circle cx="766" cy="516" r="2" fill="#33ffff" />
    <path d="M796 532l2 9 4 2z" fill="#33ff33" />
    <path d="M827 560l-8-6v4z" fill="#e63c3c" />
    <CadText $color="#33e633" x="784" y="528">Y</CadText>
    <CadText $color="#e63c3c" x="833" y="576">X</CadText>
    <CadText $color="#22e6e6" x="775" y="589">Z</CadText>

    <CadText x="433" y="305">FRONT</CadText>
    <CadText x="1281" y="483">TOP</CadText>
    <CadText x="649" y="758">RIGHT</CadText>
    <CadText x="805" y="548">PRT_CSYS_DEF</CadText>

    <path d="M822 408L890 619" stroke="#ff0000" />
    <NoteText x="450" y="485">这样面就生成功了</NoteText>
    <NoteText x="809" y="642">移动内部曲线的端点</NoteText>
    <NoteText x="809" y="662">和分割操作的端点的</NoteText>
    <NoteText x="809" y="682">数字不一样</NoteText>
  </svg>
);

/* ---------- status bar ---------- */

const StatusBar = styled.footer`
  position: relative;
  display: flex;
  height: 47px;
  padding: 18px 3px 3px 6px;
  background: #f7fafb;
  border-top: 1px solid #a9bcbc;
`;

const Messages = styled.div`
  margin-top: -10px;
  font-size: 11px;
  line-height: 16px;
  white-space: nowrap;

  p {
    display: flex;
    align-items: center;
    gap: 1px;
    margin: 0;
  }
  i {
    width: 5px;
    height: 5px;
    margin: 0 4px 0 3px;
    border-radius: 50%;
    background: #155f83;
  }
`;

const StatusTools = styled.div`
  display: flex;
  align-items: flex-start;
  margin-left: auto;
`;

const FindButton = styled.button`
  display: flex;
  align-items: center;
  gap: 3px;
  width: 42px;
  height: 24px;
  margin: 0 2px;
  padding-left: 5px;
  background: #f7f7f7;
  border: 1px solid #bfc3c5;
`;

const FilterSelect = styled.div`
  display: flex;
  align-items: center;
  width: 177px;
  height: 25px;
  margin: 0 3px 0 97px;
  background: #f5f6f6;
  border: 1px solid #a9acad;

  select {
    flex: 1;
    height: 23px;
    padding-left: 7px;
    appearance: none;
    border-right: 1px solid #bfc3c5;
  }
`;

const Watermark = styled.div`
  position: absolute;
  right: 18px;
  bottom: 3px;
  text-align: right;
  pointer-events: none;
`;

const WatermarkName = styled.div`
  position: relative;
  font: italic 40px/44px "Noto Sans CJK SC", sans-serif;
  color: #000;
  white-space: nowrap;

  span {
    color: #ff6633;
    margin-right: 6px;
  }
  svg {
    position: absolute;
    left: 62px;
    top: -15px;
  }
`;

const WatermarkUrl = styled.div`
  font: italic 15px/18px Verdana, "DejaVu Sans", sans-serif;
  color: #999;
`;

const App = () => {
  return (
    <>
      <GlobalStyle />
      <Gradients width="0" height="0" aria-hidden="true">
        <defs>
          <linearGradient id="skyFade">
            <stop offset="0" stopColor="#9fe3fb" />
            <stop offset=".4" stopColor="#eefaff" />
            <stop offset="1" stopColor="#8fdcff" />
          </linearGradient>
          <linearGradient id="creamFade">
            <stop offset="0" stopColor="#ffe9b8" />
            <stop offset=".5" stopColor="#fffdf6" />
            <stop offset="1" stopColor="#ffe0a0" />
          </linearGradient>
          <linearGradient id="paneFade" x2="0" y2="1">
            <stop offset="0" stopColor="#fff" />
            <stop offset="1" stopColor="#c5dbe6" />
          </linearGradient>
        </defs>
      </Gradients>
      <Window>
        <TitleBar>
          <QuickAccess>
            <Icon name="cube" size={15} />
            <Brand>creo<sup>●</sup></Brand>
            <IconButton aria-label="新建"><Icon name="newDoc" /></IconButton>
            <IconButton aria-label="打开"><Icon name="open" /></IconButton>
            <IconButton aria-label="保存"><Icon name="save" /></IconButton>
            <IconButton aria-label="撤消"><Icon name="undo" /></IconButton>
            <IconButton $w={14} aria-label="撤消列表"><Icon name="caretDim" size={14} /></IconButton>
            <IconButton aria-label="重做"><Icon name="redo" /></IconButton>
            <IconButton $w={14} aria-label="重做列表"><Icon name="caretDim" size={14} /></IconButton>
            <IconButton aria-label="重新生成"><Icon name="regen" /></IconButton>
            <IconButton aria-label="窗口"><Icon name="windows" /></IconButton>
            <IconButton $w={14} aria-label="窗口列表"><Icon name="caret" size={14} /></IconButton>
            <IconButton aria-label="关闭窗口"><Icon name="closeBox" size={12} /></IconButton>
            <IconButton aria-label="基准平面"><Icon name="gridPlane" size={15} /></IconButton>
            <IconButton $w={14} aria-label="基准列表"><Icon name="caret" size={14} /></IconButton>
            <Divider />
            <IconButton aria-label="自定义"><Icon name="customize" /></IconButton>
          </QuickAccess>
          <Title>11 (活动的) C:\Users\Administrator\Desktop\11.prt.1 - Creo Parametric</Title>
          <WindowButtons>
            <IconButton aria-label="最小化"><Icon name="minimize" size={14} /></IconButton>
            <IconButton aria-label="最大化"><Icon name="maximize" size={14} /></IconButton>
            <IconButton aria-label="关闭"><Icon name="close" size={14} /></IconButton>
          </WindowButtons>
        </TitleBar>

        <TabBar>
          <FileTab>文件</FileTab>
          <Tabs>
            {["模型", "分析", "实时仿真", "注释", "工具", "视图", "柔性建模", "应用程序"].map((name) => (
              <Tab key={name}>{name}</Tab>
            ))}
          </Tabs>
          <ContextTab>样式</ContextTab>
          <ContextTab $active>造型: 曲面</ContextTab>
          <TabTools>
            <IconButton aria-label="收起功能区"><Icon name="up" /></IconButton>
            <IconButton aria-label="搜索命令"><Icon name="search" size={14} /></IconButton>
            <IconButton aria-label="学习"><Icon name="cap" size={13} /></IconButton>
            <IconButton $w={14} aria-label="学习列表"><Icon name="caretWhite" size={12} /></IconButton>
            <IconButton aria-label="帮助"><b>?</b></IconButton>
          </TabTools>
        </TabBar>

        <Ribbon>
          <RibbonIcon><Icon name="surfaceLarge" size={34} /></RibbonIcon>
          <Line />
          <Dashboard>
            <Controls>
              <Group $w={270}>
                <GroupTitle>参考</GroupTitle>
                <Collector>
                  <span>主链:</span>
                  <CollectorBox $color="#f3effd">
                    <Icon name="surfaceBold" />
                    <input type="text" readOnly value="2 个链" />
                  </CollectorBox>
                </Collector>
                <Collector>
                  <span>内部链:</span>
                  <CollectorBox $color="#eafadb">
                    <Icon name="surfaceInner" />
                    <input type="text" readOnly value="1个链" />
                  </CollectorBox>
                </Collector>
              </Group>
              <Line $short />
              <Group $w={358} $inset={14}>
                <GroupTitle>选项</GroupTitle>
                <Options>
                  <UpdateButton><Icon name="refresh" size={17} />自动更新</UpdateButton>
                  <OptionButton disabled><Icon name="reparam" />重新参数化</OptionButton>
                  <OptionButton><Icon name="connect" />显示绘制连接</OptionButton>
                  <OptionButton disabled $pressed><Icon name="reparamEye" />显示重新参数化曲线</OptionButton>
                  <OptionButton><Icon name="surfaceCream" />显示为透明</OptionButton>
                </Options>
              </Group>
              <Line />
              <Pause aria-label="暂停"><i /><i /></Pause>
              <Line />
              <Confirm>
                <ConfirmButton>
                  <svg width="28" height="24" viewBox="0 0 28 24" aria-hidden="true">
                    <path d="M1 12l5-2 4 5L23 1l4 1L10 22z" fill="#2f9457" />
                    <path d="M1 12l5-2 4 5L23 1l4 1" fill="none" stroke="#c8e600" strokeWidth="1.5" />
                    <path d="M1 12l9 10L27 2" fill="none" stroke="#276b40" />
                  </svg>
                  确定
                </ConfirmButton>
                <ConfirmButton>
                  <svg width="24" height="24" viewBox="0 0 24 24" aria-hidden="true">
                    <path d="M4 4l16 16M20 4L4 20" stroke="#454545" strokeWidth="4" />
                  </svg>
                  取消
                </ConfirmButton>
              </Confirm>
            </Controls>
            <Flyouts>
              <button>参考</button>
              <button>参数化</button>
              <button>选项</button>
            </Flyouts>
          </Dashboard>
          <Line />
          <Help>
            <p>从边界创建曲面。</p>
            <a href="#more">阅读更多...</a>
          </Help>
          <Line />
          <Tools>
            <div>
              <IconButton aria-label="点"><Icon name="pins" /></IconButton>
              <IconButton aria-label="测量"><Icon name="measure" /></IconButton>
              <IconButton aria-label="平面"><Icon name="gridPlane" size={15} /></IconButton>
              <span />
              <IconButton aria-label="曲率"><Icon name="analysis" /></IconButton>
            </div>
            <p>工具</p>
          </Tools>
        </Ribbon>

        <Workspace>
          <ModelTree />
          <Graphics>
            <Model />
            <ViewBar>
              {viewTools.map(([name, label, on]) => (
                <IconButton key={name} $on={on} aria-label={label}>
                  <Icon name={name} />
                </IconButton>
              ))}
            </ViewBar>
          </Graphics>
        </Workspace>

        <StatusBar>
          <IconButton $on aria-label="导航器"><Icon name="panelEye" /></IconButton>
          <Spacer $w={1} />
          <IconButton aria-label="浏览器"><Icon name="globe" /></IconButton>
          <Spacer $w={2} />
          <IconButton aria-label="全屏"><Icon name="blank" /></IconButton>
          <Spacer $w={4} />
          <Divider $m={4} />
          <Messages>
            <p><i />正在显示零件 11的特征-1 (样式_1)中类型B-样条的曲线。</p>
            <p>
              <Icon name="nextArrow" size={12} />
              单击杆可切换切线/曲率，单击箭头终点可切换导引/从动；按 ALT 可进行拔模，按下 SHIFT 并单击杆可断开连接。在更改连接类型之前先断开连接。右击杆可以获得弹出信息。
            </p>
          </Messages>
          <StatusTools>
            <Divider $m={2} $h={26} />
            <Divider $h={26} />
            <FindButton aria-label="查找">
              <Icon name="binoculars" size={17} />
              <Icon name="caret" />
            </FindButton>
            <Divider $h={26} />
            <FilterSelect>
              <select aria-label="选择过滤器">
                <option>全部</option>
              </select>
              <Icon name="caret" />
            </FilterSelect>
            <svg width="12" height="26" viewBox="0 0 12 26" aria-hidden="true">
              <path d="M1 25L12 13M5 25l7-8M9 25l3-4" stroke="#b9c3c8" strokeWidth="1.5" />
            </svg>
          </StatusTools>
          <Watermark>
            <WatermarkName>
              <span>野火</span>论坛
              <svg width="20" height="44" viewBox="0 0 20 44" aria-hidden="true">
                <path d="M5 0q16 14 12 28-3 10-13 14 6-8 5-18Q8 15 2 9q8 4 11 12Q13 10 5 0z" fill="#ff6633" />
              </svg>
            </WatermarkName>
            <WatermarkUrl>www.proewildfire.cn</WatermarkUrl>
          </Watermark>
        </StatusBar>
      </Window>
    </>
  );
};

export default App;
